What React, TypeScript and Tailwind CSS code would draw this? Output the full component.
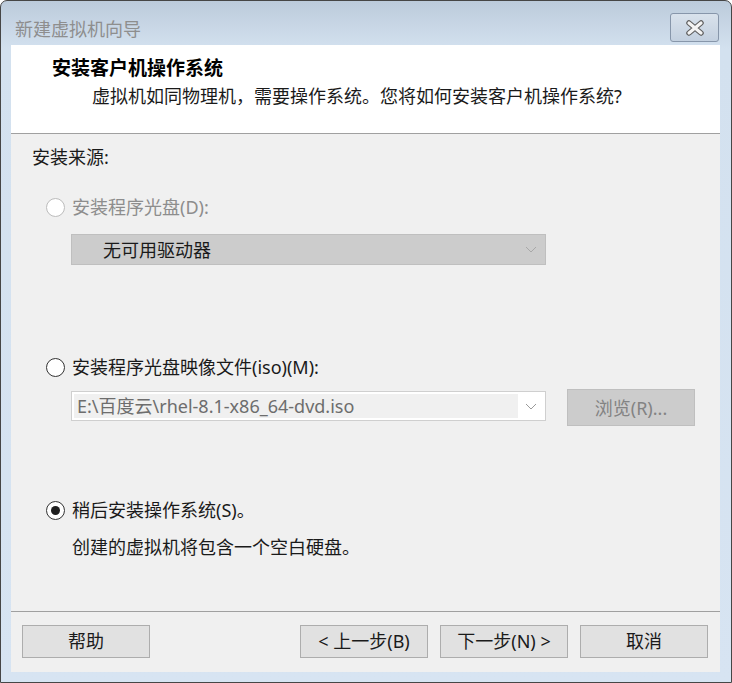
const FONT = { fontFamily: '"Noto Sans", "Noto Sans CJK SC", sans-serif' };

function Radio({ checked, disabled }: { checked?: boolean; disabled?: boolean }) {
  return (
    <span
      className={
        "flex h-[19px] w-[19px] shrink-0 items-center justify-center rounded-full border bg-white " +
        (disabled ? "border-[#bcbcbc]" : "border-[#333333]")
      }
    >
      {checked && <span className="h-[9px] w-[9px] rounded-full bg-[#1f1f1f]" />}
    </span>
  );
}

function Chevron({ color }: { color: string }) {
  return (
    <svg width="12" height="7" viewBox="0 0 12 7" fill="none">
      <path d="M1 1 L6 6 L11 1" stroke={color} strokeWidth="1" />
    </svg>
  );
}

function Button({ children }: { children: React.ReactNode }) {
  return (
    <button className="flex h-[33px] w-[128px] items-center justify-center border border-[#adadad] bg-[#e1e1e1] text-[18px] text-[#1a1a1a]">
      {children}
    </button>
  );
}

export default function App() {
  return (
    <div className="h-[683px] w-[732px] bg-white" style={FONT}>
      <div className="flex h-[683px] w-[732px] flex-col rounded-t-[7px] border border-[#464646] bg-gradient-to-b from-[#bccbdb] from-0% via-[#d3e1ef] via-[7%] to-[#d7e4f2]">
        {/* Title bar */}
        <div className="flex h-[44px] shrink-0 items-start justify-between pl-[14px] pr-[12px]">
          <span className="mt-[16px] text-[18px] leading-[24px] text-[#8e8e8e]">新建虚拟机向导</span>
          <div className="mt-[12px] flex h-[29px] w-[49px] items-center justify-center rounded-[3px] border border-[#8796aa] bg-gradient-to-b from-[#d9e2ec] to-[#c3d0df]">
            <svg width="20" height="16" viewBox="0 0 20 16">
              <path d="M4 3 L16 13 M16 3 L4 13" stroke="#5f5f5f" strokeWidth="5.5" strokeLinecap="round" />
              <path d="M4 3 L16 13 M16 3 L4 13" stroke="#f4f4f4" strokeWidth="3.2" strokeLinecap="round" />
            </svg>
          </div>
        </div>

        {/* Client area */}
        <div className="ml-[10px] flex h-[627px] w-[709px] flex-col bg-[#f0f0f0]">
          {/* Header */}
          <div className="h-[89px] shrink-0 border-b border-[#a0a0a0] bg-white">
            <div className="mt-[11px] pl-[41px] text-[19px] font-bold leading-[24px] text-black">安装客户机操作系统</div>
            <div className="mt-[4px] pl-[81px] text-[18px] leading-[24px] text-[#1a1a1a]">
              虚拟机如同物理机，需要操作系统。您将如何安装客户机操作系统?
            </div>
          </div>

          {/* Body */}
          <div className="flex h-[478px] shrink-0 flex-col border-b border-[#a0a0a0] text-[18px] leading-[24px]">
            <div className="mt-[11px] pl-[21px] text-[#1a1a1a]">安装来源:</div>

            <div className="mt-[26px] flex items-center gap-[7px] pl-[35px] text-[#8d8d8d]">
              <Radio disabled />
              <span>安装程序光盘(D):</span>
            </div>

            <div className="ml-[60px] mt-[15px] flex h-[31px] w-[475px] items-center justify-between border border-[#bfbfbf] bg-[#cccccc] pl-[31px] pr-[8px] text-[#1a1a1a]">
              <span>无可用驱动器</span>
              <Chevron color="#a8a8a8" />
            </div>

            <div className="mt-[90px] flex items-center gap-[7px] pl-[35px] text-[#1a1a1a]">
              <Radio />
              <span>安装程序光盘映像文件(iso)(M):</span>
            </div>

            <div className="mt-[10px] flex items-start pl-[60px]">
              <div className="mt-[2px] flex h-[30px] w-[475px] items-center border border-[#cfcfcf] bg-white p-[2px]">
                <div className="flex h-full w-[444px] items-center bg-[#f0f0f0] pl-[3px] text-[#6d6d6d]">
                  E:\百度云\rhel-8.1-x86_64-dvd.iso
                </div>
                <div className="flex flex-1 items-center justify-center">
                  <Chevron color="#9a9a9a" />
                </div>
              </div>
              <div className="ml-[21px] flex h-[37px] w-[128px] items-center justify-center border border-[#bfbfbf] bg-[#cccccc] text-[#838383]">
                浏览(R)...
              </div>
            </div>

            <div className="mt-[72px] flex items-center gap-[7px] pl-[35px] text-[#1a1a1a]">
              <Radio checked />
              <span>稍后安装操作系统(S)。</span>
            </div>

            <div className="mt-[13px] pl-[61px] text-[#1a1a1a]">创建的虚拟机将包含一个空白硬盘。</div>
          </div>

          {/* Buttons */}
          <div className="flex flex-1 items-start pl-[11px] pt-[13px]">
            <Button>帮助</Button>
            <div className="ml-[150px] flex gap-[12px]">
              <Button>&lt; 上一步(B)</Button>
              <Button>下一步(N) &gt;</Button>
              <Button>取消</Button>
            </div>
          </div>
        </div>
      </div>
    </div>
  );
}
